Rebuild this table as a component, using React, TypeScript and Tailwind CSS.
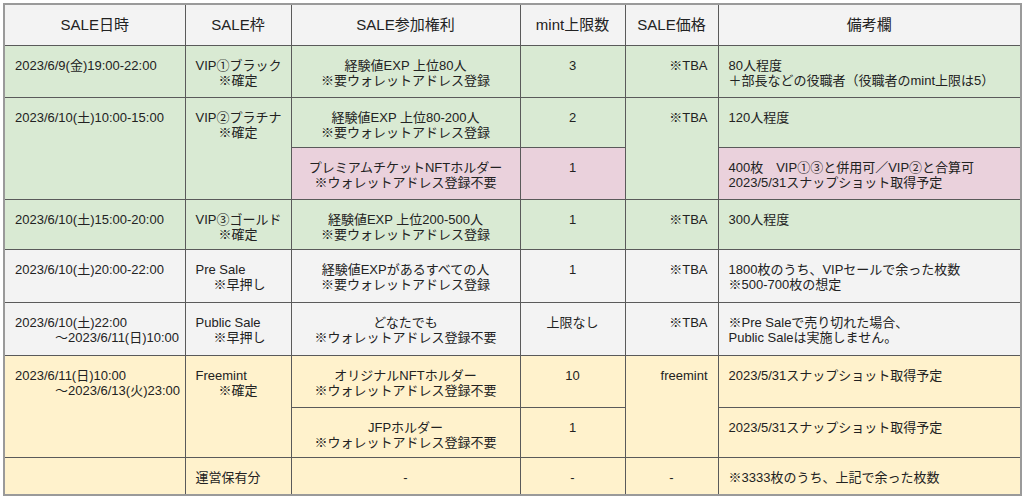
import React from 'react';

// Sale schedule table (Google Sheets look)

const FONT = { fontFamily: '"Liberation Sans", "Noto Sans CJK JP", sans-serif' };

const GREEN = 'bg-[#d9ead3]';
const PINK = 'bg-[#ead1dc]';
const GRAY = 'bg-[#f3f3f3]';
const YELLOW = 'bg-[#fff2cc]';

const cell = 'border border-[#5a5a5a] align-top pt-[12px] px-[10px] text-[13px] leading-[15px] text-[#222]';

const Lines: React.FC<{ a: string; b?: string; indent?: string }> = ({ a, b, indent }) => (
    <>
        <div className="whitespace-nowrap">{a}</div>
        {b && <div className={`whitespace-nowrap ${indent ?? ''}`}>{b}</div>}
    </>
);

const App: React.FC = () => {
    return (
        <div className="w-[1024px] h-[499px] bg-white pt-[3px] pl-[3px]" style={FONT}>
            <table className="table-fixed border-collapse border-2 border-[#9a9a9a]" style={{ width: 1017 }}>
                <colgroup>
                    <col className="w-[181px]" />
                    <col className="w-[106px]" />
                    <col className="w-[229px]" />
                    <col className="w-[105px]" />
                    <col className="w-[93px]" />
                    <col className="w-[303px]" />
                </colgroup>
                <thead>
                    <tr className={`h-[41px] ${GRAY}`}>
                        {['SALE日時', 'SALE枠', 'SALE参加権利', 'mint上限数', 'SALE価格', '備考欄'].map(h => (
                            <th key={h} className="border border-[#5a5a5a] text-[15px] font-normal text-[#222] text-center align-middle">
                                {h}
                            </th>
                        ))}
                    </tr>
                </thead>
                <tbody>
                    {/* VIP1 */}
                    <tr className={`h-[52px] ${GREEN}`}>
                        <td className={cell}>2023/6/9(金)19:00-22:00</td>
                        <td className={cell}><Lines a="VIP①ブラック" b="※確定" indent="pl-[23px]" /></td>
                        <td className={`${cell} text-center`}><Lines a="経験値EXP 上位80人" b="※要ウォレットアドレス登録" /></td>
                        <td className={`${cell} text-center`}>3</td>
                        <td className={`${cell} text-right`}>※TBA</td>
                        <td className={cell}><Lines a="80人程度" b="＋部長などの役職者（役職者のmint上限は5）" /></td>
                    </tr>

                    {/* VIP2 */}
                    <tr className="h-[50px]">
                        <td rowSpan={2} className={`${cell} ${GREEN}`}>2023/6/10(土)10:00-15:00</td>
                        <td rowSpan={2} className={`${cell} ${GREEN}`}><Lines a="VIP②プラチナ" b="※確定" indent="pl-[23px]" /></td>
                        <td className={`${cell} ${GREEN} text-center`}><Lines a="経験値EXP 上位80-200人" b="※要ウォレットアドレス登録" /></td>
                        <td className={`${cell} ${GREEN} text-center`}>2</td>
                        <td rowSpan={2} className={`${cell} ${GREEN} text-right`}>※TBA</td>
                        <td className={`${cell} ${GREEN}`}>120人程度</td>
                    </tr>
                    <tr className="h-[52px]">
                        <td className={`${cell} ${PINK} text-center`}><Lines a="プレミアムチケットNFTホルダー" b="※ウォレットアドレス登録不要" /></td>
                        <td className={`${cell} ${PINK} text-center`}>1</td>
                        <td className={`${cell} ${PINK}`}><Lines a="400枚　VIP①③と併用可／VIP②と合算可" b="2023/5/31スナップショット取得予定" /></td>
                    </tr>

                    {/* VIP3 */}
                    <tr className={`h-[50px] ${GREEN}`}>
                        <td className={cell}>2023/6/10(土)15:00-20:00</td>
                        <td className={cell}><Lines a="VIP③ゴールド" b="※確定" indent="pl-[23px]" /></td>
                        <td className={`${cell} text-center`}><Lines a="経験値EXP 上位200-500人" b="※要ウォレットアドレス登録" /></td>
                        <td className={`${cell} text-center`}>1</td>
                        <td className={`${cell} text-right`}>※TBA</td>
                        <td className={cell}>300人程度</td>
                    </tr>

                    {/* Pre sale */}
                    <tr className={`h-[53px] ${GRAY}`}>
                        <td className={cell}>2023/6/10(土)20:00-22:00</td>
                        <td className={cell}><Lines a="Pre Sale" b="※早押し" indent="pl-[18px]" /></td>
                        <td className={`${cell} text-center`}><Lines a="経験値EXPがあるすべての人" b="※要ウォレットアドレス登録" /></td>
                        <td className={`${cell} text-center`}>1</td>
                        <td className={`${cell} text-right`}>※TBA</td>
                        <td className={cell}><Lines a="1800枚のうち、VIPセールで余った枚数" b="※500-700枚の想定" /></td>
                    </tr>

                    {/* Public sale */}
                    <tr className={`h-[53px] ${GRAY}`}>
                        <td className={cell}><Lines a="2023/6/10(土)22:00" b="〜2023/6/11(日)10:00" indent="pl-[40px]" /></td>
                        <td className={cell}><Lines a="Public Sale" b="※早押し" indent="pl-[18px]" /></td>
                        <td className={`${cell} text-center`}><Lines a="どなたでも" b="※ウォレットアドレス登録不要" /></td>
                        <td className={`${cell} text-center`}>上限なし</td>
                        <td className={`${cell} text-right`}>※TBA</td>
                        <td className={cell}><Lines a="※Pre Saleで売り切れた場合、" b="Public Saleは実施しません。" /></td>
                    </tr>

                    {/* Freemint */}
                    <tr className={`h-[52px] ${YELLOW}`}>
                        <td rowSpan={2} className={cell}><Lines a="2023/6/11(日)10:00" b="〜2023/6/13(火)23:00" indent="pl-[40px]" /></td>
                        <td rowSpan={2} className={cell}><Lines a="Freemint" b="※確定" indent="pl-[23px]" /></td>
                        <td className={`${cell} text-center`}><Lines a="オリジナルNFTホルダー" b="※ウォレットアドレス登録不要" /></td>
                        <td className={`${cell} text-center`}>10</td>
                        <td rowSpan={2} className={`${cell} text-right`}>freemint</td>
                        <td className={cell}>2023/5/31スナップショット取得予定</td>
                    </tr>
                    <tr className={`h-[50px] ${YELLOW}`}>
                        <td className={`${cell} text-center`}><Lines a="JFPホルダー" b="※ウォレットアドレス登録不要" /></td>
                        <td className={`${cell} text-center`}>1</td>
                        <td className={cell}>2023/5/31スナップショット取得予定</td>
                    </tr>

                    {/* Reserve */}
                    <tr className={`h-[38px] ${YELLOW}`}>
                        <td className={cell}></td>
                        <td className={cell}>運営保有分</td>
                        <td className={`${cell} text-center`}>-</td>
                        <td className={`${cell} text-center`}>-</td>
                        <td className={`${cell} text-center`}>-</td>
                        <td className={cell}>※3333枚のうち、上記で余った枚数</td>
                    </tr>
                </tbody>
            </table>
        </div>
    );
};

export default App;
